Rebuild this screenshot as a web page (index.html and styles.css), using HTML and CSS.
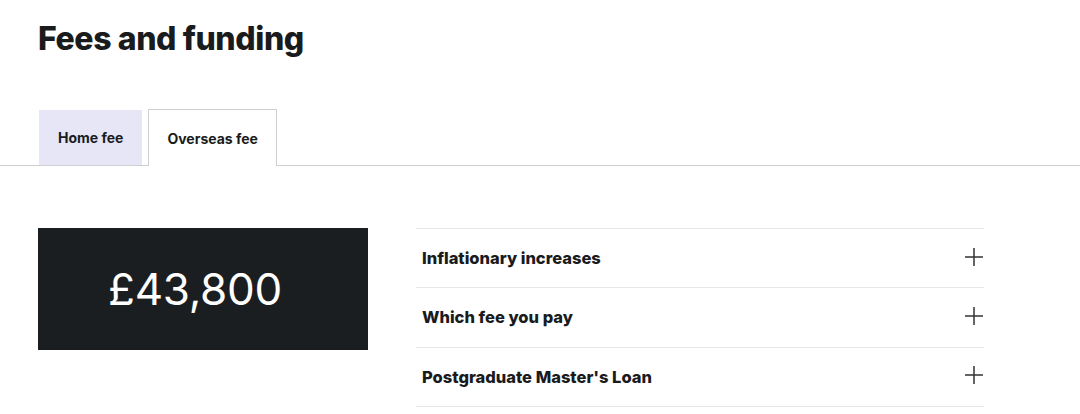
FILE: index.html
```html
<!DOCTYPE html>
<html lang="en">
<head>
<meta charset="UTF-8">
<meta name="viewport" content="width=device-width, initial-scale=1.0">
<title>Fees and funding</title>
<link rel="stylesheet" href="styles.css">
</head>
<body>
<div class="page">
  <h2 class="title">Fees and funding</h2>
  <div class="tabs">
    <button class="tab">Home fee</button>
    <button class="tab active">Overseas fee</button>
  </div>
  <div class="fees">
    <div class="fee-box">£43,800</div>
    <div class="accordion">
      <div class="item">
        <span>Inflationary increases</span>
        <svg class="plus" width="18" height="18" viewBox="0 0 18 18"><path d="M9 0V18M0 9H18" stroke="#333" stroke-width="1.5" fill="none"/></svg>
      </div>
      <div class="item">
        <span>Which fee you pay</span>
        <svg class="plus" width="18" height="18" viewBox="0 0 18 18"><path d="M9 0V18M0 9H18" stroke="#333" stroke-width="1.5" fill="none"/></svg>
      </div>
      <div class="item">
        <span>Postgraduate Master's Loan</span>
        <svg class="plus" width="18" height="18" viewBox="0 0 18 18"><path d="M9 0V18M0 9H18" stroke="#333" stroke-width="1.5" fill="none"/></svg>
      </div>
    </div>
  </div>
</div>
</body>
</html>
```

FILE: styles.css
```css
body {
  font-family: Inter, "Noto Sans", sans-serif;
  margin: 0;
  padding: 0;
  color: #1a1b1d;
  background: #fff;
}
.page {
  padding-top: 19px;
}
.title {
  margin: 0 0 50px 38px;
  font-size: 32px;
  line-height: 40px;
  font-weight: 800;
  letter-spacing: -0.4px;
}
.tabs {
  display: flex;
  align-items: flex-end;
  gap: 6px;
  padding-left: 39px;
  border-bottom: 1px solid #cfcfcf;
  height: 56px;
}
.tab {
  font-family: inherit;
  font-size: 14px;
  font-weight: 700;
  color: #1a1b1d;
  border: none;
  padding: 0 19px;
  height: 55px;
  background-color: #e6e6f7;
  cursor: pointer;
}
.tab.active {
  background-color: #fff;
  border: 1px solid #cfcfcf;
  border-bottom: none;
  height: 57px;
  margin-bottom: -1px;
  padding: 0 18px;
}
.fees {
  display: flex;
  gap: 48px;
  padding: 62px 0 0 38px;
}
.fee-box {
  width: 330px;
  height: 122px;
  box-sizing: border-box;
  padding-right: 16px;
  background-color: #1b1e21;
  color: #fff;
  display: flex;
  justify-content: center;
  align-items: center;
  font-size: 44px;
  font-weight: 400;
  letter-spacing: -0.3px;
}
.accordion {
  width: 568px;
  border-top: 1px solid #e6e6e6;
}
.item {
  display: flex;
  justify-content: space-between;
  align-items: center;
  height: 58.3px;
  padding: 0 1px 0 6px;
  border-bottom: 1px solid #e6e6e6;
  font-size: 16.5px;
  font-weight: 800;
  cursor: pointer;
}
.plus {
  margin-top: -3px;
}
```
